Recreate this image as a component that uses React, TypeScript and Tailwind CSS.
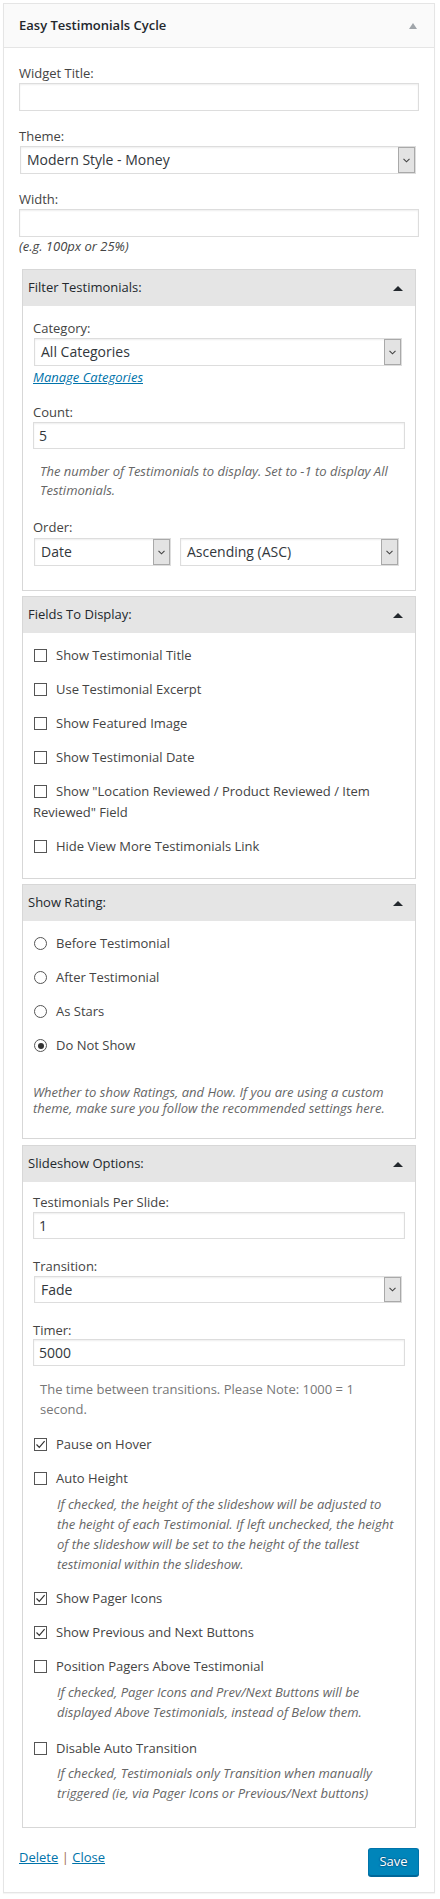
import React from "react";

function Chevron() {
  return (
    <svg width="7" height="5" viewBox="0 0 7 5">
      <path d="M0.5 0.8 L3.5 3.8 L6.5 0.8" fill="none" stroke="#444" strokeWidth="1.1" />
    </svg>
  );
}

function Label({ children, className = "" }: { children: React.ReactNode; className?: string }) {
  return <div className={`text-[13px] leading-[18px] text-[#444] ${className}`}>{children}</div>;
}

function TextInput({ value = "", className = "" }: { value?: string; className?: string }) {
  return (
    <input
      readOnly
      value={value}
      className={`block w-full border border-[#ddd] bg-white pl-[5px] text-[14px] text-[#32373c] shadow-[inset_0_1px_2px_rgba(0,0,0,0.07)] outline-none ${className}`}
    />
  );
}

function Select({ value, className = "" }: { value: string; className?: string }) {
  return (
    <div
      className={`flex border border-[#ddd] bg-white shadow-[inset_0_1px_2px_rgba(0,0,0,0.07)] ${className}`}
    >
      <div className="flex-1 truncate pl-[6px] text-[14px] leading-[26px] text-[#32373c]">{value}</div>
      <div className="flex w-[17px] items-center justify-center border border-[#a9a9a9] bg-[#e3e3e3]">
        <Chevron />
      </div>
    </div>
  );
}

function Check({ checked = false }: { checked?: boolean }) {
  return (
    <span className="relative ml-[1px] mr-[9px] inline-block h-[13px] w-[13px] border border-[#555] bg-white align-[-2px]">
      {checked && (
        <svg className="absolute left-0 top-0" width="11" height="11" viewBox="0 0 11 11">
          <path d="M1.5 5.5 L4.3 8.3 L9.6 2.2" fill="none" stroke="#333" strokeWidth="1.2" />
        </svg>
      )}
    </span>
  );
}

function Radio({ checked = false }: { checked?: boolean }) {
  return (
    <span className="relative ml-[1px] mr-[9px] inline-block h-[13px] w-[13px] rounded-full border border-[#555] bg-white align-[-2px]">
      {checked && <span className="absolute left-[2.5px] top-[2.5px] h-[6px] w-[6px] rounded-full bg-[#333]" />}
    </span>
  );
}

function UpArrow({ color }: { color: string }) {
  return (
    <svg width="10" height="5" viewBox="0 0 10 5">
      <polygon points="0,5 5,0 10,5" fill={color} />
    </svg>
  );
}

function Box({
  title,
  className = "",
  headerClass = "h-[36px]",
  children,
}: {
  title: string;
  className?: string;
  headerClass?: string;
  children: React.ReactNode;
}) {
  return (
    <div className={`mx-[3px] border border-[#d7d7d7] bg-white ${className}`}>
      <div className={`flex items-center justify-between bg-[#e5e5e5] pl-[5px] pr-[12px] ${headerClass}`}>
        <span className="text-[13px] text-[#23282d]">{title}</span>
        <UpArrow color="#23282d" />
      </div>
      {children}
    </div>
  );
}

function Row({ children, className = "" }: { children: React.ReactNode; className?: string }) {
  return <div className={`text-[13px] leading-[21px] text-[#444] ${className}`}>{children}</div>;
}

export default function App() {
  return (
    <div className="min-h-[1899px] bg-white pl-[3px] pt-[3px] font-['Open_Sans',sans-serif]">
      <div className="w-[432px] border border-[#e5e5e5] bg-white shadow-[0_1px_1px_rgba(0,0,0,0.04)]">
        <div className="flex h-[44px] items-center justify-between border-b border-[#e5e5e5] bg-[#fafafa] pl-[15px] pr-[17px]">
          <span className="text-[13px] font-semibold text-[#23282d]">Easy Testimonials Cycle</span>
          <svg width="8" height="6" viewBox="0 0 8 6">
            <polygon points="0,6 4,0 8,6" fill="#a0a5aa" />
          </svg>
        </div>

        <div className="px-[15px] pb-[16px]">
          <Label className="mb-[1px] mt-[16px]">Widget Title:</Label>
          <TextInput className="h-[28px]" />
          <Label className="mb-[1px] mt-[16px]">Theme:</Label>
          <Select value="Modern Style - Money" className="ml-[1px] mr-[3px] h-[28px]" />
          <Label className="mb-[1px] mt-[16px]">Width:</Label>
          <TextInput className="h-[28px]" />
          <Label className="italic">(e.g. 100px or 25%)</Label>

          <Box title="Filter Testimonials:" className="mt-[14px]">
            <div className="px-[10px] pb-[24px] pt-[13px]">
              <Label className="mb-[1px]">Category:</Label>
              <Select value="All Categories" className="ml-[1px] mr-[3px] h-[28px]" />
              <div className="mt-[2px] text-[13px] italic leading-[18px]">
                <a href="#" className="text-[#0073aa] underline">
                  Manage Categories
                </a>
              </div>
              <Label className="mb-[1px] mt-[17px]">Count:</Label>
              <TextInput value="5" className="h-[27px]" />
              <p className="mt-[13px] pl-[7px] text-[13px] italic leading-[19px] text-[#666]">
                The number of Testimonials to display. Set to -1 to display All
                <br />
                Testimonials.
              </p>
              <Label className="mb-[2px] mt-[18px]">Order:</Label>
              <div className="flex gap-[9px] pl-[1px]">
                <Select value="Date" className="h-[28px] w-[137px]" />
                <Select value="Ascending (ASC)" className="h-[28px] w-[219px]" />
              </div>
            </div>
          </Box>

          <Box title="Fields To Display:" className="mt-[5px]">
            <div className="flex flex-col gap-[13px] px-[10px] pb-[21px] pt-[12px]">
              <Row>
                <Check />
                Show Testimonial Title
              </Row>
              <Row>
                <Check />
                Use Testimonial Excerpt
              </Row>
              <Row>
                <Check />
                Show Featured Image
              </Row>
              <Row>
                <Check />
                Show Testimonial Date
              </Row>
              <Row>
                <Check />
                Show "Location Reviewed / Product Reviewed / Item
                <br />
                Reviewed" Field
              </Row>
              <Row>
                <Check />
                Hide View More Testimonials Link
              </Row>
            </div>
          </Box>

          <Box title="Show Rating:" className="mt-[5px]">
            <div className="px-[10px] pb-[22px] pt-[12px]">
              <div className="flex flex-col gap-[13px]">
                <Row>
                  <Radio />
                  Before Testimonial
                </Row>
                <Row>
                  <Radio />
                  After Testimonial
                </Row>
                <Row>
                  <Radio />
                  As Stars
                </Row>
                <Row>
                  <Radio checked />
                  Do Not Show
                </Row>
              </div>
              <p className="mt-[28px] text-[13px] italic leading-[16px] text-[#666]">
                Whether to show Ratings, and How. If you are using a custom
                <br />
                theme, make sure you follow the recommended settings here.
              </p>
            </div>
          </Box>

          <Box title="Slideshow Options:" className="mt-[6px]">
            <div className="px-[10px] pb-[24px] pt-[11px]">
              <Label className="mb-[1px]">Testimonials Per Slide:</Label>
              <TextInput value="1" className="h-[27px]" />
              <Label className="mb-[1px] mt-[18px]">Transition:</Label>
              <Select value="Fade" className="ml-[1px] mr-[3px] h-[27px]" />
              <Label className="mt-[18px]">Timer:</Label>
              <TextInput value="5000" className="h-[27px]" />
              <p className="mt-[13px] pl-[7px] text-[13px] leading-[20px] text-[#777]">
                The time between transitions. Please Note: 1000 = 1
                <br />
                second.
              </p>

              <Row className="mt-[15px]">
                <Check checked />
                Pause on Hover
              </Row>
              <Row className="mt-[13px]">
                <Check />
                Auto Height
              </Row>
              <p className="mt-[5px] pl-[24px] text-[13px] italic leading-[20px] text-[#666]">
                If checked, the height of the slideshow will be adjusted to
                <br />
                the height of each Testimonial. If left unchecked, the height
                <br />
                of the slideshow will be set to the height of the tallest
                <br />
                testimonial within the slideshow.
              </p>
              <Row className="mt-[14px]">
                <Check checked />
                Show Pager Icons
              </Row>
              <Row className="mt-[13px]">
                <Check checked />
                Show Previous and Next Buttons
              </Row>
              <Row className="mt-[13px]">
                <Check />
                Position Pagers Above Testimonial
              </Row>
              <p className="mt-[5px] pl-[24px] text-[13px] italic leading-[20px] text-[#666]">
                If checked, Pager Icons and Prev/Next Buttons will be
                <br />
                displayed Above Testimonials, instead of Below them.
              </p>
              <Row className="mt-[16px]">
                <Check />
                Disable Auto Transition
              </Row>
              <p className="mt-[4px] pl-[24px] text-[13px] italic leading-[20px] text-[#666]">
                If checked, Testimonials only Transition when manually
                <br />
                triggered (ie, via Pager Icons or Previous/Next buttons)
              </p>
            </div>
          </Box>

          <div className="mt-[20px] flex items-start justify-between">
            <div className="text-[13px] leading-[18px] text-[#444]">
              <a href="#" className="text-[#0073aa] underline">
                Delete
              </a>{" "}
              <span className="text-[#a0704a]">|</span>{" "}
              <a href="#" className="text-[#0073aa] underline">
                Close
              </a>
            </div>
            <button className="h-[28px] w-[51px] rounded-[3px] border border-[#0073aa] border-b-[#006799] bg-[#0085ba] text-[13px] text-white shadow-[0_1px_0_#006799] [text-shadow:0_-1px_1px_#006799,1px_0_1px_#006799,0_1px_1px_#006799,-1px_0_1px_#006799]">
              Save
            </button>
          </div>
        </div>
      </div>
    </div>
  );
}
